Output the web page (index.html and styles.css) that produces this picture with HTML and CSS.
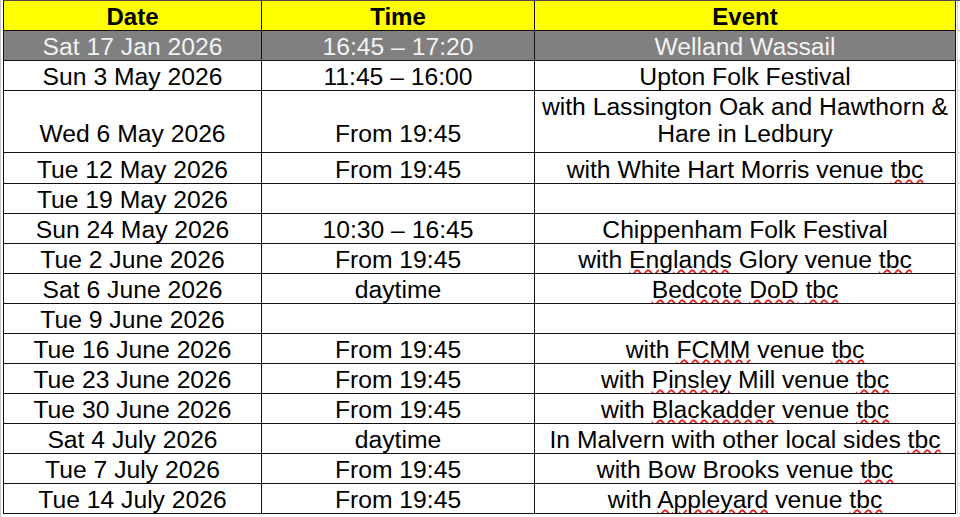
FILE: index.html
```html
<!DOCTYPE html>
<html lang="en">
<head>
<meta charset="utf-8">
<title>Events</title>
<link rel="stylesheet" href="styles.css">
</head>
<body>
<div class="sheet">
  <div class="table">
    <div class="c hd"><span>Date</span></div><div class="c hd"><span>Time</span></div><div class="c hd"><span>Event</span></div><div class="gut"></div>
    <div class="c hl"><span>Sat 17 Jan 2026</span></div><div class="c hl"><span>16:45 – 17:20</span></div><div class="c hl"><span>Welland Wassail</span></div><div class="gut"></div>
    <div class="c"><span>Sun 3 May 2026</span></div><div class="c"><span>11:45 – 16:00</span></div><div class="c"><span>Upton Folk Festival</span></div><div class="gut"></div>
    <div class="c tall"><span>Wed 6 May 2026</span></div><div class="c tall"><span>From 19:45</span></div><div class="c tall"><span>with Lassington Oak and Hawthorn &amp;<br>Hare in Ledbury</span></div><div class="gut"></div>
    <div class="c"><span>Tue 12 May 2026</span></div><div class="c"><span>From 19:45</span></div><div class="c"><span>with White Hart Morris venue <u class="sp">tbc</u></span></div><div class="gut"></div>
    <div class="c"><span>Tue 19 May 2026</span></div><div class="c"></div><div class="c"></div><div class="gut"></div>
    <div class="c"><span>Sun 24 May 2026</span></div><div class="c"><span>10:30 – 16:45</span></div><div class="c"><span>Chippenham Folk Festival</span></div><div class="gut"></div>
    <div class="c"><span>Tue 2 June 2026</span></div><div class="c"><span>From 19:45</span></div><div class="c"><span>with <u class="sp">Englands</u> Glory venue <u class="sp">tbc</u></span></div><div class="gut"></div>
    <div class="c"><span>Sat 6 June 2026</span></div><div class="c"><span>daytime</span></div><div class="c"><span><u class="sp">Bedcote</u> <u class="sp">DoD</u> <u class="sp">tbc</u></span></div><div class="gut"></div>
    <div class="c"><span>Tue 9 June 2026</span></div><div class="c"></div><div class="c"></div><div class="gut"></div>
    <div class="c"><span>Tue 16 June 2026</span></div><div class="c"><span>From 19:45</span></div><div class="c"><span>with <u class="sp">FCMM</u> venue <u class="sp">tbc</u></span></div><div class="gut"></div>
    <div class="c"><span>Tue 23 June 2026</span></div><div class="c"><span>From 19:45</span></div><div class="c"><span>with <u class="sp">Pinsley</u> Mill venue <u class="sp">tbc</u></span></div><div class="gut"></div>
    <div class="c"><span>Tue 30 June 2026</span></div><div class="c"><span>From 19:45</span></div><div class="c"><span>with <u class="sp">Blackadder</u> venue <u class="sp">tbc</u></span></div><div class="gut"></div>
    <div class="c"><span>Sat 4 July 2026</span></div><div class="c"><span>daytime</span></div><div class="c"><span>In Malvern with other local sides <u class="sp">tbc</u></span></div><div class="gut"></div>
    <div class="c"><span>Tue 7 July 2026</span></div><div class="c"><span>From 19:45</span></div><div class="c"><span>with Bow Brooks venue <u class="sp">tbc</u></span></div><div class="gut"></div>
    <div class="c"><span>Tue 14 July 2026</span></div><div class="c"><span>From 19:45</span></div><div class="c"><span>with <u class="sp">Appleyard</u> venue <u class="sp">tbc</u></span></div><div class="gut"></div>
  </div>
</div>
</body>
</html>
```

FILE: styles.css
```css
html, body {
  margin: 0;
  padding: 0;
  background: #ffffff;
}

.sheet {
  width: 960px;
  height: 517px;
  overflow: hidden;
  box-sizing: border-box;
  border-left: 1px solid #c6c6c6;
  padding-left: 2px;
}

.table {
  display: grid;
  grid-template-columns: 259px 273px 421px 4px;
  grid-template-rows: 30px 30px 30px 62px 31px repeat(11, 30px);
  border-top: 1px solid #4a4a4a;
  font-family: "Liberation Sans", Arial, sans-serif;
  font-size: 24.7px;
  line-height: 27px;
  color: #000000;
}

.c {
  display: flex;
  align-items: flex-end;
  justify-content: center;
  text-align: center;
  border-right: 1px solid #111111;
  border-bottom: 1px solid #111111;
  white-space: nowrap;
  overflow: hidden;
}

.c:nth-child(4n+1) {
  border-left: 1px solid #111111;
}

.tall {
  padding-bottom: 5px;
}

.gut {
  border-bottom: 1px solid #d4d4d4;
  margin-left: 1px;
  border-left: 1px solid #d4d4d4;
}

.hd {
  background: #ffff00;
  font-weight: bold;
  font-size: 24px;
}

.hl {
  background: #808080;
  color: #f2f2f2;
}

.sp {
  text-decoration: underline wavy #e02828;
  text-decoration-thickness: 1.5px;
  text-underline-offset: 1px;
}
```
